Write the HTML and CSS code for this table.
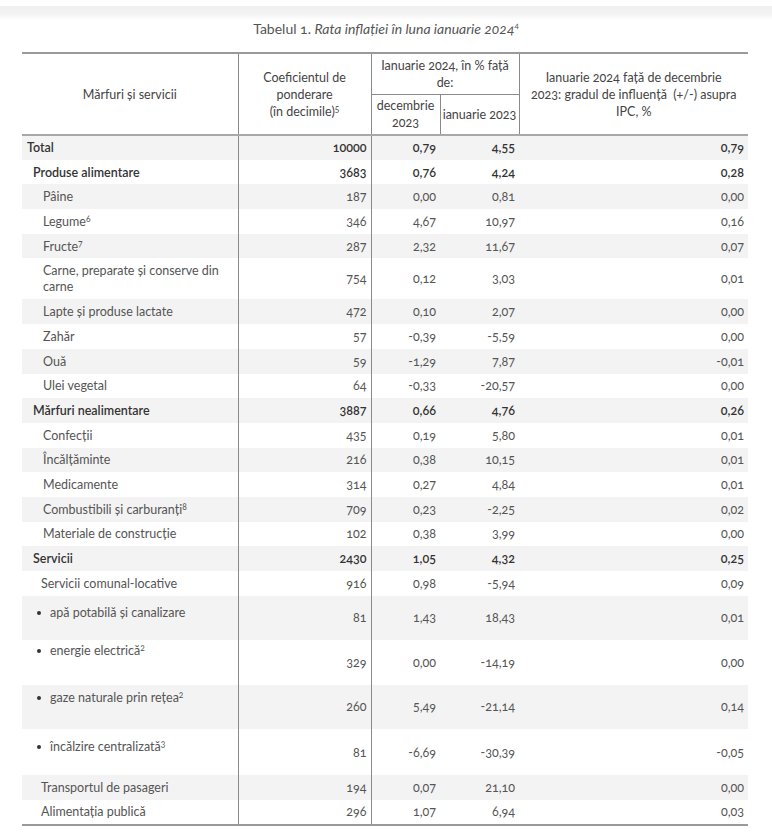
FILE: index.html
```html
<!DOCTYPE html>
<html lang="ro">
<head>
<meta charset="utf-8">
<link rel="stylesheet" href="styles.css">
</head>
<body>
<div class="topband"></div>
<p class="caption">Tabelul 1. <em>Rata inflației în luna ianuarie 2024</em><sup>4</sup></p>
<table class="tbl">
  <colgroup>
    <col class="c1"><col class="c2"><col class="c3"><col class="c4"><col class="c5">
  </colgroup>
  <thead>
    <tr class="h1">
      <th rowspan="2" class="hfirst">Mărfuri și servicii</th>
      <th rowspan="2">Coeficientul de ponderare<br>(în decimile)<sup>5</sup></th>
      <th colspan="2" class="htop">Ianuarie 2024, în % față<br>de:</th>
      <th rowspan="2" class="hlast">Ianuarie 2024 față de decembrie<br>2023: gradul de influență &nbsp;(+/-) asupra<br>IPC, %</th>
    </tr>
    <tr class="h2">
      <th>decembrie<br>2023</th>
      <th class="hnarrow">ianuarie 2023</th>
    </tr>
  </thead>
  <tbody>
    <tr class="g b"><td class="l0">Total</td><td>10000</td><td>0,79</td><td>4,55</td><td>0,79</td></tr>
    <tr class="b"><td class="l1">Produse alimentare</td><td>3683</td><td>0,76</td><td>4,24</td><td>0,28</td></tr>
    <tr class="g"><td class="l2">Pâine</td><td>187</td><td>0,00</td><td>0,81</td><td>0,00</td></tr>
    <tr><td class="l2">Legume<sup>6</sup></td><td>346</td><td>4,67</td><td>10,97</td><td>0,16</td></tr>
    <tr class="g"><td class="l2">Fructe<sup>7</sup></td><td>287</td><td>2,32</td><td>11,67</td><td>0,07</td></tr>
    <tr class="two"><td class="l2">Carne, preparate și conserve din carne</td><td>754</td><td>0,12</td><td>3,03</td><td>0,01</td></tr>
    <tr class="g"><td class="l2">Lapte și produse lactate</td><td>472</td><td>0,10</td><td>2,07</td><td>0,00</td></tr>
    <tr><td class="l2">Zahăr</td><td>57</td><td>-0,39</td><td>-5,59</td><td>0,00</td></tr>
    <tr class="g"><td class="l2">Ouă</td><td>59</td><td>-1,29</td><td>7,87</td><td>-0,01</td></tr>
    <tr><td class="l2">Ulei vegetal</td><td>64</td><td>-0,33</td><td>-20,57</td><td>0,00</td></tr>
    <tr class="g b"><td class="l1">Mărfuri nealimentare</td><td>3887</td><td>0,66</td><td>4,76</td><td>0,26</td></tr>
    <tr><td class="l2">Confecții</td><td>435</td><td>0,19</td><td>5,80</td><td>0,01</td></tr>
    <tr class="g"><td class="l2">Încălțăminte</td><td>216</td><td>0,38</td><td>10,15</td><td>0,01</td></tr>
    <tr><td class="l2">Medicamente</td><td>314</td><td>0,27</td><td>4,84</td><td>0,01</td></tr>
    <tr class="g"><td class="l2">Combustibili și carburanți<sup>8</sup></td><td>709</td><td>0,23</td><td>-2,25</td><td>0,02</td></tr>
    <tr><td class="l2">Materiale de construcție</td><td>102</td><td>0,38</td><td>3,99</td><td>0,00</td></tr>
    <tr class="g b"><td class="l1">Servicii</td><td>2430</td><td>1,05</td><td>4,32</td><td>0,25</td></tr>
    <tr><td class="l3">Servicii comunal-locative</td><td>916</td><td>0,98</td><td>-5,94</td><td>0,09</td></tr>
    <tr class="g tall t1"><td class="bul"><span class="dot"></span>apă potabilă și canalizare</td><td>81</td><td>1,43</td><td>18,43</td><td>0,01</td></tr>
    <tr class="tall t2"><td class="bul"><span class="dot"></span>energie electrică<sup>2</sup></td><td>329</td><td>0,00</td><td>-14,19</td><td>0,00</td></tr>
    <tr class="g tall t3"><td class="bul"><span class="dot"></span>gaze naturale prin rețea<sup>2</sup></td><td>260</td><td>5,49</td><td>-21,14</td><td>0,14</td></tr>
    <tr class="tall t4"><td class="bul"><span class="dot"></span>încălzire centralizată<sup>3</sup></td><td>81</td><td>-6,69</td><td>-30,39</td><td>-0,05</td></tr>
    <tr class="g"><td class="l3">Transportul de pasageri</td><td>194</td><td>0,07</td><td>21,10</td><td>0,00</td></tr>
    <tr class="last"><td class="l3">Alimentația publică</td><td>296</td><td>1,07</td><td>6,94</td><td>0,03</td></tr>
  </tbody>
</table>
</body>
</html>
```
FILE: styles.css
```css
* { box-sizing: border-box; }
html, body { background: #fff; }
body {
  margin: 0;
  font-family: Lato, "Open Sans", "Liberation Sans", sans-serif;
  font-variant-numeric: oldstyle-nums;
  font-size: 12.5px;
  color: #555;
}
.topband {
  margin-top: 6px;
  height: 14px;
  background: linear-gradient(#efefef, #f3f3f3 60%, #fff);
}
.caption {
  margin: 0;
  padding-top: 1px;
  height: 32px;
  text-align: center;
  font-size: 14px;
  line-height: 16px;
  color: #555;
}
.caption em { font-style: italic; }
.caption sup { font-size: 8px; vertical-align: 6px; line-height: 0; }
sup { font-size: 8.5px; vertical-align: 4px; line-height: 0; }

.tbl {
  margin-left: 22px;
  width: 726px;
  border-collapse: collapse;
  table-layout: fixed;
  border-top: 2px solid #9a9a9a;
  border-bottom: 2px solid #9a9a9a;
}
.c1 { width: 216px; }
.c2 { width: 133px; }
.c3 { width: 69px; }
.c4 { width: 79px; }
.c5 { width: 229px; }

th {
  font-weight: 400;
  color: #444;
  font-size: 12.5px;
  line-height: 17px;
  text-align: center;
  vertical-align: middle;
  border: 1px solid #8a8a8a;
  padding: 0 4px;
}
.hfirst { border-left: none; }
.hlast { border-right: none; padding: 0 4px; }
.hnarrow { padding: 0; white-space: nowrap; }
.h1 { height: 41px; }
.h2 { height: 41px; }
thead tr.h2 { border-bottom: 2px solid #a8a8a8; }
.htop { padding-top: 1px; }

td {
  height: 24.7px;
  padding: 1px 4px 0;
  text-align: right;
  vertical-align: middle;
  line-height: 16px;
  white-space: nowrap;
}
td:nth-child(2) { border-right: 1px solid #8a8a8a; }
td:first-child { border-right: 1px solid #8a8a8a; text-align: left; white-space: normal; }
tr.g td { background: #f3f3f3; }
tr.b td { color: #333; font-weight: 600; }

.l0 { padding-left: 5px; }
.l1 { padding-left: 11px; }
.l2 { padding-left: 21px; }
.l3 { padding-left: 19px; }

tr.two td { height: 41px; }
tr.tall td { height: 44.5px; }
tr.t4 td { height: 46px; }
td.bul { vertical-align: top; padding-left: 15px; }
tr.t1 td.bul { padding-top: 9px; }
tr.t2 td.bul { padding-top: 3px; }
tr.t3 td.bul { padding-top: 5px; }
tr.t4 td.bul { padding-top: 10px; }
.dot {
  display: inline-block;
  width: 4px;
  height: 4px;
  border-radius: 50%;
  background: #333;
  margin-right: 9px;
  vertical-align: 2px;
}
```
